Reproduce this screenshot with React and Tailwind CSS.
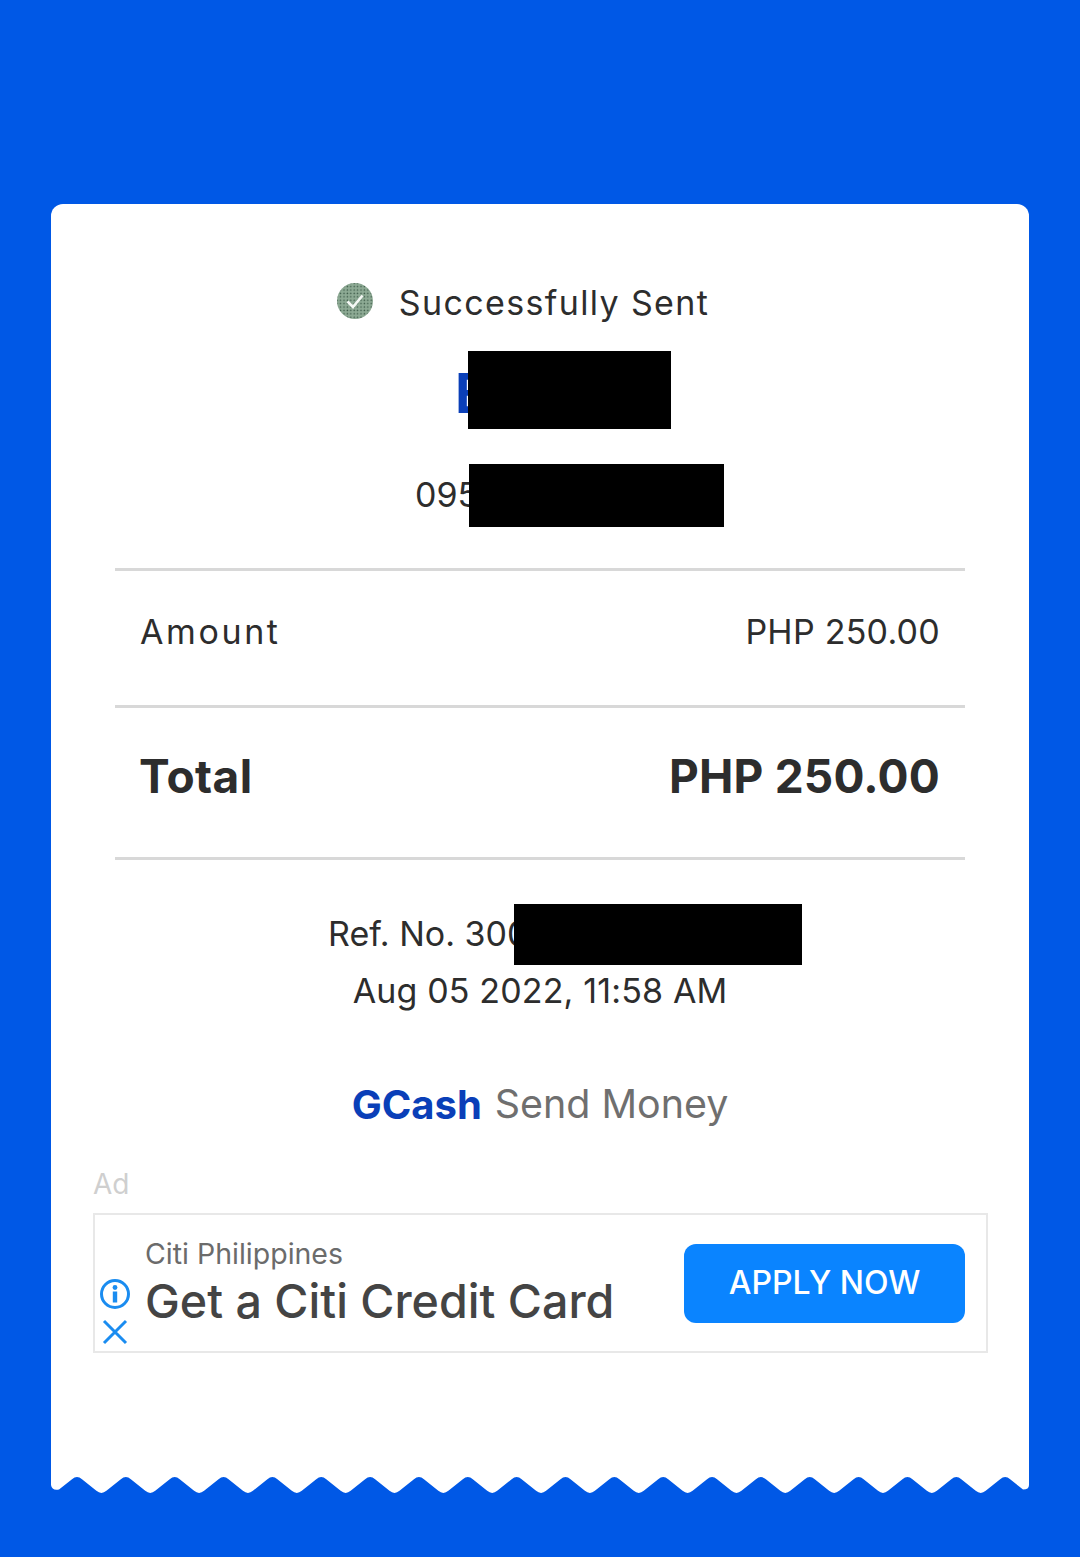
const karla = "font-['Inter','Liberation_Sans',sans-serif]";

function wavePath() {
  const w = 978, p = 48.85;
  let d = `M0 0 H${w} V8 Q${w} 12.5 972 12.5 `;
  for (let n = 19; n >= 0; n--) {
    const peak = 26 + n * p;
    const valley = 50.4 + n * p;
    if (valley < 966) {
      d += `L${valley + 5} 13.8 Q${valley} 18 ${valley - 5} 13.8 `;
    }
    d += `L${peak + 5} 2.2 Q${peak} -2 ${peak - 5} 2.2 `;
  }
  d += `L8 12.5 Q1 14 0 8 Z`;
  return d;
}

function Divider() {
  return <div className="mx-[64px] h-[3px] bg-[#d8d8d8]" />;
}

function CheckBadge() {
  return (
    <svg width="38" height="38" viewBox="0 0 38 38" aria-hidden="true" className="mt-[-2px] shrink-0">
      <defs>
        <pattern id="dots" width="3.4" height="3.4" patternUnits="userSpaceOnUse">
          <rect width="3.4" height="3.4" fill="#8daa94" />
          <circle cx="1.2" cy="1.2" r="0.75" fill="#3c5a48" />
        </pattern>
      </defs>
      <circle cx="19" cy="19" r="18" fill="url(#dots)" />
      <path d="M11.5 19.5 L17 25 L26.5 13.5" fill="none" stroke="#f4f8f4" strokeWidth="2.6" />
    </svg>
  );
}

export default function App() {
  return (
    <div className={`min-h-[1557px] bg-[#0058e6] px-[51px] pt-[204px] ${karla}`}>
      <div className="h-[1273px] rounded-t-[12px] bg-white text-[#2d2d2d]">
        <div className="flex h-[118px] items-end justify-center">
          <div className="flex h-[40px] items-center gap-[25px] pr-[35px]">
            <CheckBadge />
            <span className="text-[34px] tracking-[1.35px]">Successfully Sent</span>
          </div>
        </div>

        <div className="mt-[29px] flex h-[78px] items-center justify-center">
          <div className="relative mt-[6px] w-[170px] text-[55px] font-bold leading-none text-[#0a3fb8]">
            B
            <div className="absolute left-[13px] top-[-14.5px] h-[78px] w-[203px] bg-black" />
          </div>
        </div>

        <div className="mt-[34px] flex h-[63px] items-center justify-center">
          <div className="relative w-[250px] text-[34px] leading-none text-[#2d2d2d]">
            095
            <div className="absolute left-[54px] top-[-14px] h-[63px] w-[255px] bg-black" />
          </div>
        </div>

        <div className="mt-[42px]">
          <Divider />
        </div>

        <div className="flex h-[134px] items-center justify-between px-[89px] pb-[14px] text-[34px]">
          <span className="tracking-[2.6px]">Amount</span>
          <span className="tracking-[0.25px]">PHP 250.00</span>
        </div>

        <Divider />

        <div className="flex h-[149px] items-center justify-between pb-[12px] pl-[88px] pr-[89px] text-[46px] font-bold">
          <span className="tracking-[0.4px]">Total</span>
          <span className="tracking-[0.2px]">PHP 250.00</span>
        </div>

        <Divider />

        <div className="mt-[43px] flex h-[61px] items-center justify-center">
          <div className="relative w-[424px] text-[34px] leading-none">
            Ref. No. 300
            <div className="absolute left-[186px] top-[-13px] h-[61px] w-[288px] bg-black" />
          </div>
        </div>

        <div className="mt-[-3px] flex h-[58px] items-center justify-center text-[34px] tracking-[0.15px]">
          Aug 05 2022, 11:58 AM
        </div>

        <div className="mt-[57px] flex h-[58px] items-center justify-center gap-[13px]">
          <span className="text-[40px] font-bold text-[#0a3fb8]">GCash</span>
          <span className="text-[39.4px] text-[#6f6f6f]">Send Money</span>
        </div>

        <div className="ml-[42px] mt-[34px] h-[32px] text-[28px] leading-[32px] text-[#cfcfcf]">Ad</div>

        <div className="ml-[42px] mt-[13px] flex h-[140px] w-[895px] items-stretch border-2 border-[#e8e8e8]">
          <div className="mr-[10px] flex w-[40px] flex-col items-center justify-end pb-[6px]">
            <svg width="32" height="32" viewBox="0 0 32 32" aria-hidden="true">
              <circle cx="16" cy="16" r="13.5" fill="none" stroke="#1a8cf0" strokeWidth="3" />
              <circle cx="16" cy="9.5" r="2.4" fill="#1a8cf0" />
              <rect x="13.8" y="13.5" width="4.4" height="11" fill="#1a8cf0" />
            </svg>
            <svg className="mt-[9px]" width="26" height="26" viewBox="0 0 26 26" aria-hidden="true">
              <path d="M2 2 L24 24 M24 2 L2 24" stroke="#1a8cf0" strokeWidth="3" fill="none" />
            </svg>
          </div>
          <div className="flex flex-1 flex-col pt-[22px]">
            <div className="text-[28.5px] leading-[34px] text-[#6b6b6b]">Citi Philippines</div>
            <div className="mt-[2px] text-[46.6px] font-medium leading-[56px] text-[#444444]">Get a Citi Credit Card</div>
          </div>
          <div className="flex items-center pr-[21px]">
            <div className="flex h-[79px] w-[281px] items-center justify-center rounded-[12px] bg-[#0a84ff] text-[32px] font-medium text-white">
              APPLY NOW
            </div>
          </div>
        </div>
      </div>
      <svg width="978" height="17" viewBox="0 0 978 17" className="block" aria-hidden="true">
        <path d={wavePath()} fill="#ffffff" />
      </svg>
    </div>
  );
}
